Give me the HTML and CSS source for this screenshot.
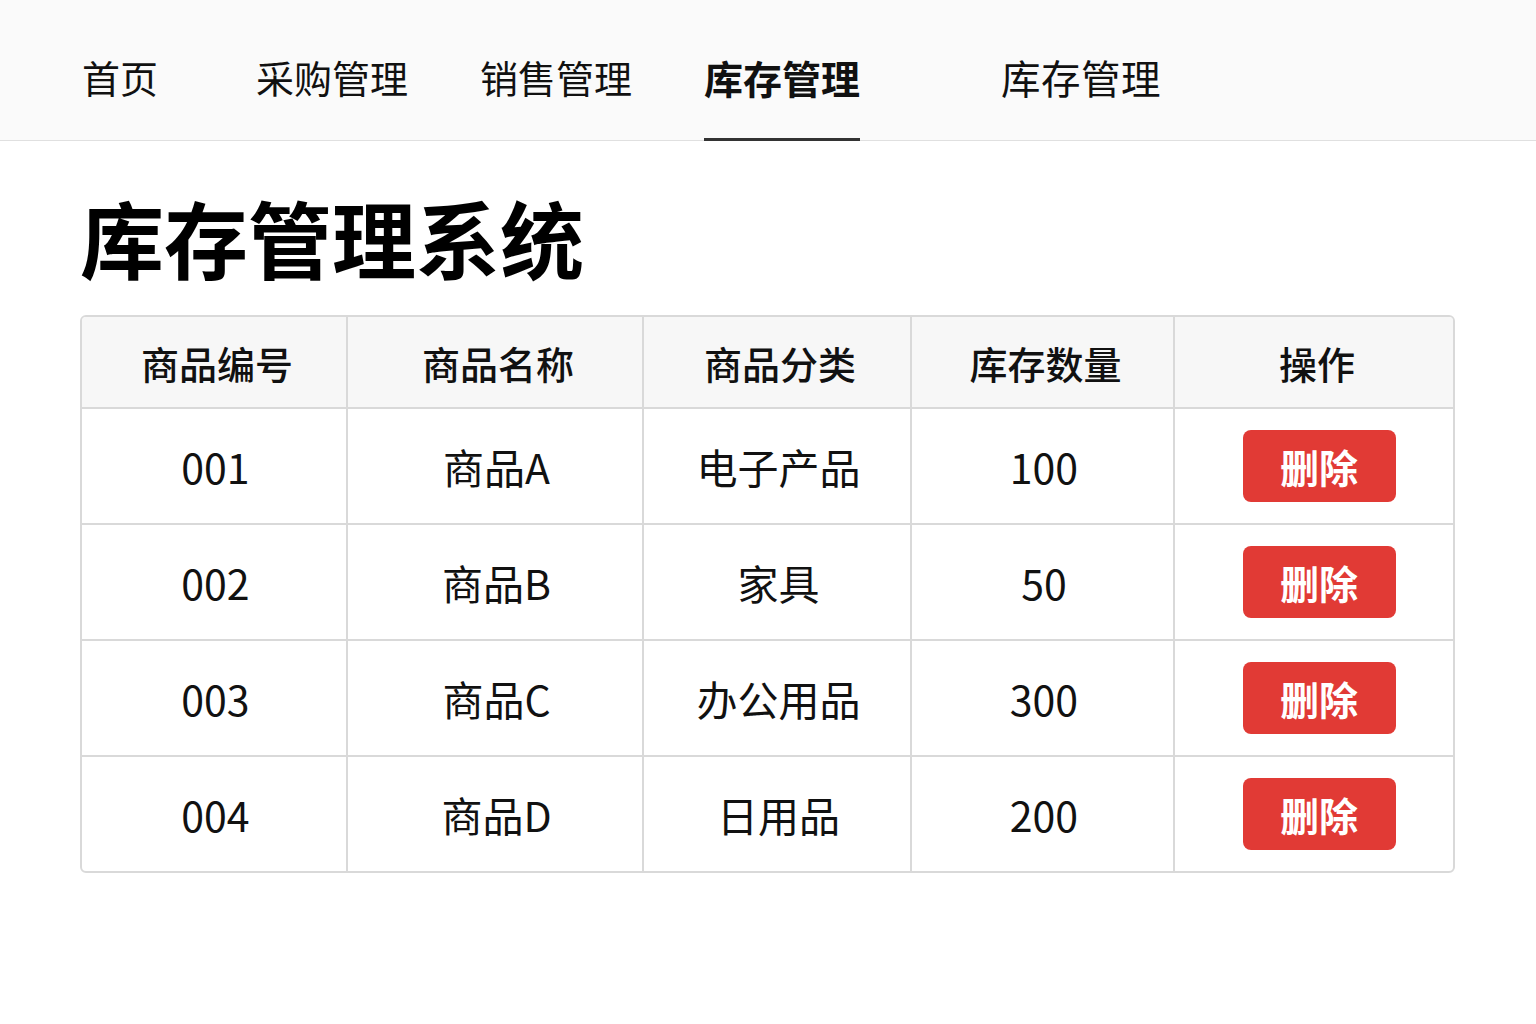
FILE: index.html
```html
<!DOCTYPE html>
<html lang="zh-CN">
<head>
<meta charset="utf-8">
<title>库存管理系统</title>
<link rel="stylesheet" href="styles.css">
</head>
<body>
<nav class="nav">
  <a class="nav-item nav-first">首页</a>
  <a class="nav-item">采购管理</a>
  <a class="nav-item">销售管理</a>
  <a class="nav-item nav-active">库存管理</a>
  <a class="nav-item nav-last">库存管理</a>
</nav>
<main class="main">
  <h1 class="title">库存管理系统</h1>
  <table class="grid">
    <colgroup>
      <col class="c1"><col class="c2"><col class="c3"><col class="c4"><col class="c5">
    </colgroup>
    <thead>
      <tr><th>商品编号</th><th>商品名称</th><th>商品分类</th><th>库存数量</th><th>操作</th></tr>
    </thead>
    <tbody>
      <tr><td>001</td><td>商品A</td><td>电子产品</td><td>100</td><td><button class="del">删除</button></td></tr>
      <tr><td>002</td><td>商品B</td><td>家具</td><td>50</td><td><button class="del">删除</button></td></tr>
      <tr><td>003</td><td>商品C</td><td>办公用品</td><td>300</td><td><button class="del">删除</button></td></tr>
      <tr><td>004</td><td>商品D</td><td>日用品</td><td>200</td><td><button class="del">删除</button></td></tr>
    </tbody>
  </table>
</main>
</body>
</html>
```
FILE: styles.css
```css
html, body {
  margin: 0;
  padding: 0;
  background: #ffffff;
  font-family: "Noto Sans CJK SC", "Noto Sans", sans-serif;
  color: #111;
}
.nav {
  display: flex;
  align-items: stretch;
  height: 141px;
  box-sizing: border-box;
  padding-left: 82px;
  background: #fafafa;
  border-bottom: 1px solid #e0e0e0;
  gap: 72px;
}
.nav-item {
  display: flex;
  align-items: center;
  padding-top: 16px;
  font-size: 38px;
  color: #111;
  box-sizing: border-box;
  border-bottom: 3px solid transparent;
  margin-bottom: -1px;
  line-height: 1;
}
.nav-first { margin-right: 26px; }
.nav-active {
  font-size: 39px;
  font-weight: 700;
  border-bottom-color: #333;
  margin-right: 69px;
}
.nav-last {
  font-size: 39.5px;
  letter-spacing: 0.5px;
}
.main {
  padding: 0 80px;
}
.title {
  margin: 46px 0 28px;
  font-size: 84px;
  line-height: 100px;
  font-weight: 700;
  color: #000;
}
.grid {
  width: 1375px;
  border-collapse: separate;
  border-spacing: 0;
  border: 2px solid #d9d9d9;
  border-radius: 6px;
  overflow: hidden;
  table-layout: fixed;
}
.c1 { width: 266px; }
.c2 { width: 296px; }
.c3 { width: 268px; }
.c4 { width: 263px; }
.c5 { width: 278px; }
.grid th, .grid td {
  text-align: center;
  padding: 0;
  border-right: 2px solid #d9d9d9;
  border-bottom: 2px solid #d9d9d9;
}
.grid th:last-child, .grid td:last-child { border-right: none; }
.grid tbody tr:last-child td { border-bottom: none; }
.grid th {
  height: 90px;
  background: #f7f7f7;
  font-size: 38px;
  font-weight: 500;
  color: #111;
  padding-left: 6px;
}
.grid td {
  height: 114px;
  font-size: 41px;
  font-weight: 400;
  color: #111;
  padding-left: 3px;
}
.del {
  width: 153px;
  height: 72px;
  margin-left: 7px;
  border: none;
  border-radius: 8px;
  background: #e13a35;
  color: #fff;
  font-family: "Noto Sans CJK SC", "Noto Sans", sans-serif;
  font-size: 39px;
  font-weight: 700;
  line-height: 1;
  padding: 0;
}
```
